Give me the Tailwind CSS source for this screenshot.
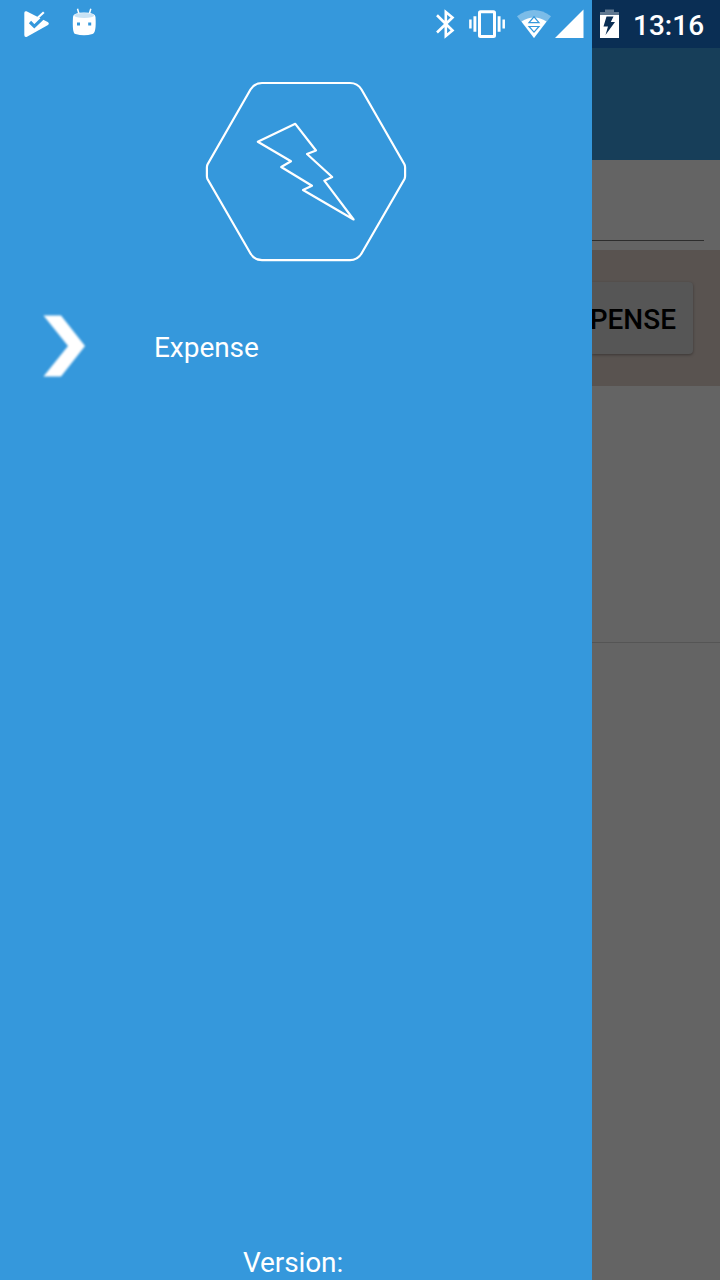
<!DOCTYPE html>
<html lang="en">
<head>
<meta charset="utf-8">
<title>Expense</title>
<script src="https://cdn.jsdelivr.net/npm/@tailwindcss/browser@4"></script>
</head>
<body class="flex h-[1280px] w-[720px] overflow-hidden bg-[#646464] font-['Roboto',sans-serif] text-[28px]">
  <aside class="flex w-[592px] shrink-0 flex-col bg-[#3598dc] text-white">
    <div class="flex h-12 justify-between">
      <svg class="h-12 w-[120px]" viewBox="0 0 120 48">
        <path d="M26.500 11.300 L47.700 22 Q49.800 23.500 48 25 L27 36.700 Q24.300 37.500 24.300 35 V13 Q24.300 10.600 26.500 11.300Z" fill="#fff"/>
        <path d="M30 22 L34.300 26.300 L44.500 16.500" fill="none" stroke="#3598dc" stroke-width="3.200"/>
        <path d="M34 21.300 L43.800 12.300" fill="none" stroke="#fff" stroke-width="2.200"/>
        <path d="M77.500 8.800 L79 14 M90.800 8.800 L89.300 14" stroke="#fff" stroke-width="1.500"/>
        <path d="M73 17 Q72 34 75.500 34 Q84 36.500 92.500 34 Q96.500 33 95.500 17 Q95.500 12.500 84 12.500 Q73 12.500 73 17Z" fill="#fff"/>
        <ellipse cx="84.200" cy="15.500" rx="10" ry="2.600" fill="#c9e3f5"/>
        <path d="M77 22.500h3v3h-3z M88.200 22.500h3v3h-3z" fill="#3598dc"/>
      </svg>
      <svg class="h-12 w-[167px]" viewBox="425 0 167 48">
        <path d="M437 15.200 L452.500 30.500 L445.800 36 V12 L452.500 17.500 L437 32.500" fill="none" stroke="#fff" stroke-width="2.600"/>
        <rect x="479.500" y="11.800" width="15" height="24.600" rx="1" fill="none" stroke="#fff" stroke-width="3"/>
        <path d="M470.400 19.500v9 M503.700 19.500v9" stroke="#fff" stroke-width="2.500"/>
        <path d="M474.900 16.200v15.600 M499.100 16.200v15.600" stroke="#fff" stroke-width="2.900"/>
        <path d="M517 16.300 Q534 3.500 551 16.300 L534 38Z" fill="#fff" fill-opacity=".35"/>
        <path d="M521.500 21.500 Q534 13.500 546.500 21.500 L534 38Z" fill="#fff"/>
        <path d="M529 22.700 L534 16.800 L539 22.700Z M529 26.500 H539 L534 32.200Z" fill="#fff" stroke="#3598dc" stroke-width="1.200"/>
        <path d="M555 38 L583.500 9.500 V38Z" fill="#fff"/>
      </svg>
    </div>
    <svg class="mt-[27px] ml-[200px] h-[192px] w-[212px]" viewBox="200 75 212 192" fill="none" stroke="#fff" stroke-width="2.200">
      <path d="M262 83 H350 Q357.500 83 361.500 89.500 L404.500 164.500 Q405.100 166 405.100 167.500 V176 Q405.100 177.500 404.500 179 L361.500 253.500 Q357.500 260.200 350 260.200 H262 Q254.500 260.200 250.500 253.500 L207.500 179 Q206.900 177.500 206.900 176 V167.500 Q206.900 166 207.500 164.500 L250.500 89.500 Q254.500 83 262 83Z"/>
      <path stroke-linejoin="round" d="M295.300 123.800 L316 150.500 L307 154 L332.200 177 L324.300 180.700 L353.600 219.500 L303 190 L312 185.800 L281.200 167 L291 161.300 L257.800 141.700Z"/>
    </svg>
    <nav class="mt-[39px] flex h-20 items-center">
      <svg class="ml-9 h-20 w-16 blur-[1.2px]" viewBox="36 306 64 80"><path d="M43.500 315.500 H61 L85 346 L61 376.500 H43.500 L68 346Z" fill="#fff"/></svg>
      <span class="ml-[54px] pt-1 leading-8 tracking-[-0.05px]">Expense</span>
    </nav>
    <footer class="mb-px mt-auto w-[586px] text-center leading-8 tracking-[-0.1px]">Version:</footer>
  </aside>
  <main class="flex w-32 flex-col overflow-hidden">
    <div class="flex h-12 shrink-0 items-center bg-[#0a2e54] text-white">
      <svg class="h-12 w-9 shrink-0" viewBox="592 0 36 48">
        <path d="M600 15V12h5V9.500h9V12h5v3Z" fill="#fff" fill-opacity=".35"/>
        <path d="M600 15h19v23h-19Z" fill="#fff"/>
        <path d="M606.500 16.500 H613.500 L610.800 22 H615 L605.500 35 L608 26.500 H603.500Z" fill="#0a2e54"/>
      </svg>
      <span class="ml-[5px] pt-[3px] font-medium">13:16</span>
    </div>
    <div class="h-28 shrink-0 bg-[#173e59]"></div>
    <div class="h-[90px] shrink-0 pr-4 pt-20"><div class="h-px bg-[#2d2d2d]"></div></div>
    <div class="h-[136px] shrink-0 bg-[#595350] pr-[27px] pt-8">
      <div class="flex h-[72px] items-center justify-end rounded-r bg-[#565656] pr-[17px] font-medium text-black shadow-[0_1px_3px_rgba(0,0,0,0.35)]"><span class="pt-1">PENSE</span></div>
    </div>
    <div class="h-[257px] shrink-0 border-b border-[#555555]"></div>
  </main>
</body>
</html>
